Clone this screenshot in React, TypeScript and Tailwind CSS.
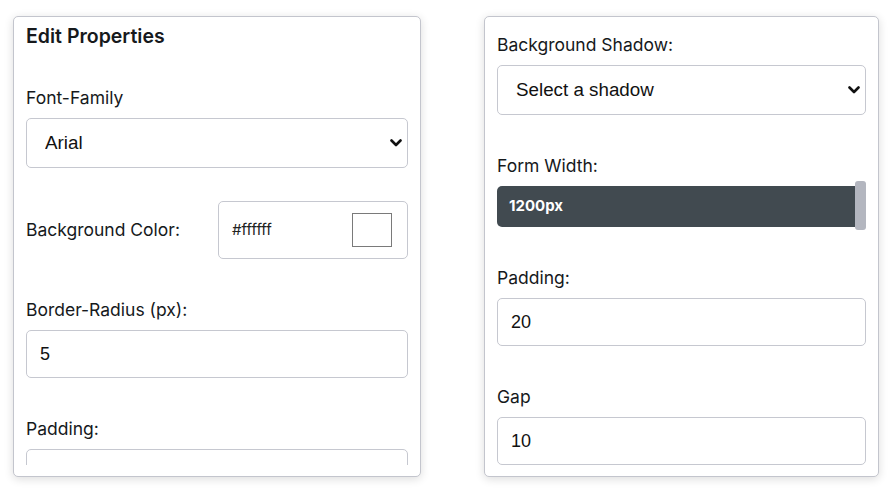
import { useState } from 'react'

const labelCls = "block text-[17.5px] leading-6 text-[#16191c] mb-2"
const boxCls = "w-full border border-[#c6c8d0] rounded-[5px] bg-white text-[#111] font-['Liberation_Sans',Arial,sans-serif] outline-none"

function Chevron() {
  return (
    <svg width="12" height="8" viewBox="0 0 12 8" className="absolute right-[6px] top-1/2 -translate-y-1/2 pointer-events-none">
      <path d="M1.5 1.5 L6 6 L10.5 1.5" fill="none" stroke="#111" strokeWidth="2.6" strokeLinecap="round" strokeLinejoin="round" />
    </svg>
  )
}

function Select({ value, options }: { value: string; options: string[] }) {
  const [v, setV] = useState(value)
  return (
    <div className="relative">
      <select value={v} onChange={(e) => setV(e.target.value)} className={`${boxCls} appearance-none h-[50px] pl-[18px] pr-8 text-[18.8px]`}>
        {options.map((o) => <option key={o}>{o}</option>)}
      </select>
      <Chevron />
    </div>
  )
}

function TextBox({ value }: { value: string }) {
  const [v, setV] = useState(value)
  return <input value={v} onChange={(e) => setV(e.target.value)} className={`${boxCls} h-[48px] pl-[13px] text-[18px]`} />
}

export default function App() {
  return (
    <div className="h-[488px] bg-white flex gap-[63px] pl-[13px] pt-[16px] font-['Inter','Open_Sans',sans-serif]">
      {/* left panel */}
      <div className="w-[408px] h-[461px] border border-[#c3c5cd] rounded-[5px] shadow-[0_2px_10px_rgba(0,0,0,0.14)] pb-[11px] flex flex-col bg-white">
        <div className="flex-1 overflow-hidden px-3 pt-[5px]">
          <h3 className="text-[19.5px] leading-7 font-semibold text-[#16191c]">Edit Properties</h3>
          <div className="mt-[36px]">
            <label className={labelCls}>Font-Family</label>
            <Select value="Arial" options={['Arial', 'Verdana', 'Georgia', 'Times New Roman']} />
          </div>
          <div className="mt-[33px] flex items-center justify-between">
            <span className="text-[17.5px] leading-6 text-[#16191c]">Background Color:</span>
            <div className="w-[190px] h-[58px] border border-[#c6c8d0] rounded-[5px] flex items-center justify-between pl-[13px] pr-[15px]">
              <span className="text-[15px] text-[#222]">#ffffff</span>
              <div className="w-[40px] h-[34px] border border-[#7a7a7a] bg-white" />
            </div>
          </div>
          <div className="mt-[39px]">
            <label className={labelCls}>Border-Radius (px):</label>
            <TextBox value="5" />
          </div>
          <div className="mt-[39px]">
            <label className={labelCls}>Padding:</label>
            <TextBox value="20" />
          </div>
        </div>
      </div>

      {/* right panel */}
      <div className="w-[395px] h-[461px] border border-[#c3c5cd] rounded-[5px] shadow-[0_2px_10px_rgba(0,0,0,0.14)] bg-white px-3 pt-4 flex flex-col gap-[39px]">
        <div>
          <label className={labelCls}>Background Shadow:</label>
          <Select value="Select a shadow" options={['Select a shadow', 'Small', 'Medium', 'Large']} />
        </div>
        <div>
          <label className={labelCls}>Form Width:</label>
          <div className="relative h-[41px] mr-[11px] bg-[#414a50] rounded-l-[5px] flex items-center pl-3">
            <span className="text-[15px] font-bold text-white">1200px</span>
            <div className="absolute -right-[11px] -top-[5px] w-[11px] h-[49px] rounded-[3px] bg-[#b3b6bf]" />
          </div>
        </div>
        <div>
          <label className={labelCls}>Padding:</label>
          <TextBox value="20" />
        </div>
        <div>
          <label className={labelCls}>Gap</label>
          <TextBox value="10" />
        </div>
      </div>
    </div>
  )
}
